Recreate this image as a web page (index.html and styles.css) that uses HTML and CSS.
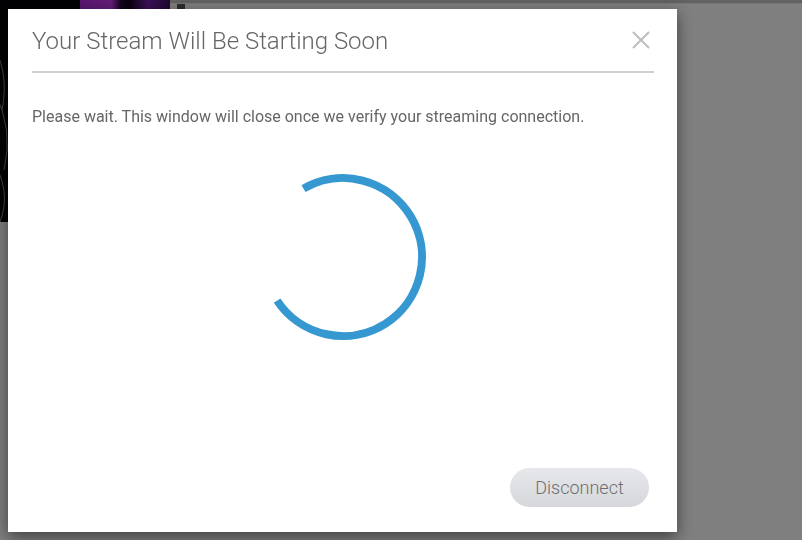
FILE: index.html
```html
<!DOCTYPE html>
<html lang="en">
<head>
    <meta charset="UTF-8">
    <title>Stream Starting</title>
    <link rel="stylesheet" href="styles.css">
</head>
<body>

    <!-- Trang phía sau -->
    <div class="page">
        <div class="player">
            <div class="player-top"></div>
            <svg class="player-lines" width="170" height="222" viewBox="0 0 170 222">
                <path d="M-10 40 Q10 70 2 110" />
                <path d="M-6 90 Q14 130 4 170" />
                <path d="M-8 160 Q12 190 0 222" />
            </svg>
        </div>
        <div class="page-main">
            <div class="topbar"></div>
            <span class="topbar-tab"></span>
        </div>
    </div>

    <!-- Hộp thoại -->
    <div class="backdrop">
        <div class="modal">
            <div class="modal-header">
                <h2 class="modal-title">Your Stream Will Be Starting Soon</h2>
                <button class="close-btn" aria-label="Close">
                    <svg width="18" height="18" viewBox="0 0 18 18">
                        <path d="M1 1 L17 17 M17 1 L1 17" />
                    </svg>
                </button>
            </div>
            <p class="modal-text">Please wait. This window will close once we verify your streaming connection.</p>
            <div class="spinner">
                <svg width="170" height="170" viewBox="0 0 170 170">
                    <path d="M45.5 16.6 A79 79 0 1 1 19.1 128.6" />
                </svg>
            </div>
            <div class="modal-footer">
                <button class="btn-disconnect">Disconnect</button>
            </div>
        </div>
    </div>

</body>
</html>
```

FILE: styles.css
```css
body {
    margin: 0;
    padding: 0;
    font-family: 'Roboto', 'Liberation Sans', sans-serif;
    background-color: #fff;
    overflow: hidden;
}
.page {
    display: flex;
    height: 540px;
}
.player {
    width: 170px;
    height: 222px;
    background-color: #050308;
    position: relative;
    overflow: hidden;
}
.player-top {
    margin-left: 80px;
    height: 10px;
    background: linear-gradient(90deg, #b22ee0 0%, #c83af0 35%, #2a0a40 45%, #120018 55%, #7a20b0 75%, #3a1060 100%);
}
.player-lines {
    position: absolute;
    top: 0;
    left: 0;
}
.player-lines path {
    fill: none;
    stroke: #8a8a8a;
    stroke-width: 1;
}
.page-main {
    flex: 1;
    background-color: #fff;
}
.topbar {
    height: 3px;
    background-color: #c4c4c4;
    border-bottom: 1px solid #eee;
}
.topbar-tab {
    display: block;
    margin: 0 0 0 7px;
    width: 8px;
    height: 5px;
    background-color: #5a5a5a;
}
.backdrop {
    position: fixed;
    top: 0;
    left: 0;
    right: 0;
    bottom: 0;
    background-color: rgba(0, 0, 0, 0.5);
    padding: 9px 0 0 8px;
}
.modal {
    width: 669px;
    height: 523px;
    box-sizing: border-box;
    background-color: #fff;
    box-shadow: 0 5px 15px rgba(0, 0, 0, 0.5);
    padding: 17px 23px 25px 24px;
    display: flex;
    flex-direction: column;
}
.modal-header {
    display: flex;
    align-items: center;
    justify-content: space-between;
    padding-bottom: 15px;
    border-bottom: 2px solid #d0d0d0;
}
.modal-title {
    margin: 0;
    font-size: 24px;
    font-weight: 300;
    line-height: 30px;
    color: #666;
}
.close-btn {
    border: none;
    background: none;
    padding: 0;
    margin-right: 4px;
    margin-top: -3px;
    width: 18px;
    height: 18px;
    cursor: pointer;
}
.close-btn svg {
    display: block;
}
.close-btn path {
    stroke: #bdbdbd;
    stroke-width: 2;
    fill: none;
}
.modal-text {
    margin: 34px 0 0;
    font-size: 16px;
    line-height: 20px;
    color: #666;
}
.spinner {
    margin-top: 45px;
    display: flex;
    justify-content: center;
}
.spinner svg {
    display: block;
}
.spinner path {
    fill: none;
    stroke: #3598d0;
    stroke-width: 8;
}
.modal-footer {
    margin-top: auto;
    display: flex;
    justify-content: flex-end;
    padding-right: 5px;
}
.btn-disconnect {
    width: 139px;
    height: 39px;
    border: none;
    border-radius: 20px;
    background: linear-gradient(#e7e8eb, #d5d7db);
    font-family: 'Roboto', 'Liberation Sans', sans-serif;
    font-size: 18px;
    font-weight: 300;
    line-height: 39px;
    color: #6e6e6e;
    padding: 0;
    cursor: pointer;
}
```
